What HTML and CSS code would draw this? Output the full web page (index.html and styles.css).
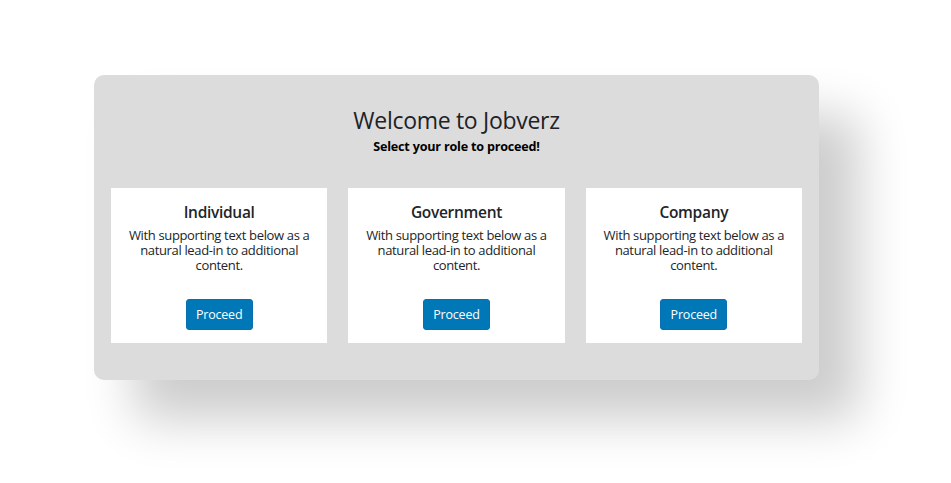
FILE: index.html
```html
<!DOCTYPE html>
<html lang="en">
<head>
<meta charset="utf-8">
<title>Jobverz</title>
<link rel="stylesheet" href="styles.css">
</head>
<body>
<main class="page">
  <section class="panel">
    <header class="panel-head">
      <h1 class="title">Welcome to Jobverz</h1>
      <p class="subtitle">Select your role to proceed!</p>
    </header>
    <div class="cards">
      <article class="card">
        <h2 class="card-title">Individual</h2>
        <p class="card-text">With supporting text below as a natural lead-in to additional content.</p>
        <button class="btn">Proceed</button>
      </article>
      <article class="card">
        <h2 class="card-title">Government</h2>
        <p class="card-text">With supporting text below as a natural lead-in to additional content.</p>
        <button class="btn">Proceed</button>
      </article>
      <article class="card">
        <h2 class="card-title">Company</h2>
        <p class="card-text">With supporting text below as a natural lead-in to additional content.</p>
        <button class="btn">Proceed</button>
      </article>
    </div>
  </section>
</main>
</body>
</html>
```
FILE: styles.css
```css
* { box-sizing: border-box; }
html, body { margin: 0; padding: 0; background: #fff; }
body {
  font-family: "Open Sans", "Noto Sans", sans-serif;
  color: #212529;
}
.page {
  min-height: 100vh;
  padding: 75px 0 0 94px;
}
.panel {
  width: 725px;
  height: 305px;
  background: #dcdcdc;
  border-radius: 10px;
  box-shadow: 40px 40px 50px rgba(0, 0, 0, 0.2);
  padding: 30px 17px 0;
}
.panel-head {
  text-align: center;
}
.title {
  margin: 0;
  font-size: 23px;
  font-weight: 500;
  line-height: 30px;
  letter-spacing: -0.3px;
  color: #1e2226;
}
.subtitle {
  margin: 4px 0 0;
  font-size: 12.6px;
  font-weight: 700;
  color: #000;
  line-height: 16px;
  letter-spacing: -0.2px;
}
.cards {
  margin-top: 33px;
  display: grid;
  grid-template-columns: repeat(3, 1fr);
  gap: 21px;
}
.card {
  background: #fff;
  height: 155px;
  padding: 14px 14px 0;
  text-align: center;
  display: flex;
  flex-direction: column;
  align-items: center;
}
.card-title {
  margin: 0;
  font-size: 15.5px;
  font-weight: 600;
  line-height: 20px;
  letter-spacing: -0.3px;
}
.card-text {
  margin: 6px 0 0;
  font-size: 13px;
  line-height: 15px;
  letter-spacing: -0.35px;
  font-weight: 400;
}
.btn {
  margin-top: 26px;
  width: 67px;
  height: 31px;
  border: 1px solid #0a6fb0;
  border-radius: 3px;
  background: #0077b6;
  color: #fff;
  font-family: inherit;
  font-size: 12.5px;
  letter-spacing: -0.2px;
  padding: 0;
  cursor: pointer;
}
```
